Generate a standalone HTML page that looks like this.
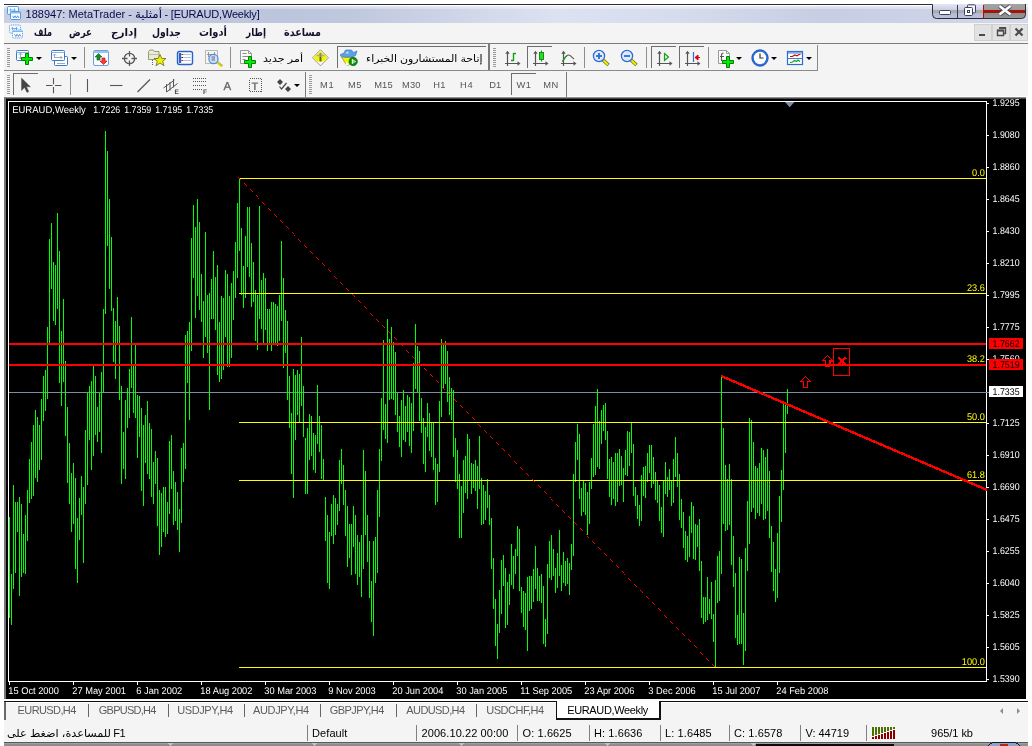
<!DOCTYPE html><html lang="ar"><head><meta charset="utf-8"><title>188947: MetaTrader</title><style>
html,body{margin:0;padding:0;background:#fff;}
body{width:1032px;height:746px;position:relative;overflow:hidden;font-family:"Liberation Sans","DejaVu Sans",sans-serif;font-size:11px;color:#000;}
.a{position:absolute;}
.t{position:absolute;white-space:nowrap;line-height:12px;height:12px;}
.ui{font-size:11px;}
svg{position:absolute;overflow:visible;}
svg text{font-family:"Liberation Sans","DejaVu Sans",sans-serif;text-rendering:geometricPrecision;}
</style></head><body><div id="root" style="position:absolute;left:0;top:0;width:1032px;height:746px;will-change:transform">
<div class="a" style="left:4px;top:4px;width:1024px;height:738px;background:#f4f4f4"></div>
<div class="a" style="left:4px;top:4px;width:1024px;height:19px;background:linear-gradient(90deg,#cad0e3 0%,#c3cadf 14%,#bcc5dc 27%,#c0c8de 34%,#cfd5e8 44%,#dde2f1 54%,#d6dced 66%,#c7cee3 80%,#cbd1e6 88%,#d4d9ec 100%)"></div>
<div class="a" style="left:4px;top:5px;width:1024px;height:4px;background:linear-gradient(rgba(255,255,255,1) 0%,rgba(255,255,255,.95) 25%,rgba(255,255,255,.55) 26%,rgba(255,255,255,.25) 100%)"></div>
<div class="t " id="ti1" dir="ltr" style="left:25.5px;top:8px;font-size:11px;color:#0a0a48;line-height:12px;height:12px;letter-spacing:0.026px;">188947: MetaTrader -</div>
<div class="t " id="ti2" dir="rtl" style="left:134.5px;top:8px;font-size:11px;color:#0a0a48;line-height:12px;height:12px;transform:scaleX(1.0740);transform-origin:0 0;">أمثلية</div>
<div class="t " id="ti3" dir="ltr" style="left:164.5px;top:8px;font-size:11px;color:#0a0a48;line-height:12px;height:12px;letter-spacing:-0.188px;">- [EURAUD,Weekly]</div>
<div class="a" style="left:4px;top:43px;width:1024px;height:1px;background:#7c7c7c"></div>
<div class="t " id="m0" dir="rtl" style="left:33.5px;top:26px;font-size:11px;font-weight:bold;color:#10102a;line-height:12px;height:12px;transform:scaleX(0.7375);transform-origin:0 0;">ملف</div>
<div class="t " id="m1" dir="rtl" style="left:68.5px;top:26px;font-size:11px;font-weight:bold;color:#10102a;line-height:12px;height:12px;transform:scaleX(0.7889);transform-origin:0 0;">عرض</div>
<div class="t " id="m2" dir="rtl" style="left:110.5px;top:26px;font-size:11px;font-weight:bold;color:#10102a;line-height:12px;height:12px;transform:scaleX(0.9471);transform-origin:0 0;">إدارج</div>
<div class="t " id="m3" dir="rtl" style="left:151.5px;top:26px;font-size:11px;font-weight:bold;color:#10102a;line-height:12px;height:12px;transform:scaleX(0.8421);transform-origin:0 0;">جداول</div>
<div class="t " id="m4" dir="rtl" style="left:198.5px;top:26px;font-size:11px;font-weight:bold;color:#10102a;line-height:12px;height:12px;transform:scaleX(0.9010);transform-origin:0 0;">أدوات</div>
<div class="t " id="m5" dir="rtl" style="left:245.5px;top:26px;font-size:11px;font-weight:bold;color:#10102a;line-height:12px;height:12px;transform:scaleX(0.8127);transform-origin:0 0;">إطار</div>
<div class="t " id="m6" dir="rtl" style="left:283.5px;top:26px;font-size:11px;font-weight:bold;color:#10102a;line-height:12px;height:12px;transform:scaleX(0.8706);transform-origin:0 0;">مساعدة</div>
<div class="a" id="chart" style="left:4px;top:97px;width:1024px;height:602px;background:#000"></div>
<div class="a" style="left:4px;top:96px;width:1024px;height:1px;background:#fdfdfd"></div>
<div class="a" style="left:4px;top:97px;width:1024px;height:1px;background:#8c8c8c"></div>
<div class="a" style="left:4px;top:98px;width:1024px;height:1px;background:#484848"></div>
<div class="a" style="left:4px;top:97px;width:2px;height:602px;background:#777"></div>
<div class="a" style="left:1026px;top:97px;width:2px;height:604px;background:#fcfcfc"></div>
<div class="a" style="left:4px;top:699px;width:1024px;height:2px;background:#fcfcfc"></div>
<svg id="cs" style="left:0;top:0" width="1032" height="746" viewBox="0 0 1032 746">
<g shape-rendering="crispEdges">
<path d="M8.5 681.5V101.5H986.5V681.5H8.5" fill="none" stroke="#fff" stroke-width="1"/>
<path d="M987 103.5h2M987 135.5h2M987 167.5h2M987 199.5h2M987 231.5h2M987 263.5h2M987 295.5h2M987 327.5h2M987 359.5h2M987 423.5h2M987 455.5h2M987 487.5h2M987 519.5h2M987 551.5h2M987 583.5h2M987 615.5h2M987 647.5h2M987 679.5h2" stroke="#fff" stroke-width="1" fill="none"/>
<path d="M9.5 682v3M73.5 682v3M137.5 682v3M201.5 682v3M265.5 682v3M329.5 682v3M393.5 682v3M457.5 682v3M521.5 682v3M585.5 682v3M649.5 682v3M713.5 682v3M777.5 682v3" stroke="#fff" stroke-width="1" fill="none"/>
<path d="M9 392.5H986" stroke="#7d8da3" stroke-width="1" fill="none"/>
<path id="bars" d="M9.5 517V618M11.5 574V625M13.5 485V589M15.5 502V573M17.5 502V532M19.5 497V596M21.5 504V577M23.5 534V573M25.5 515V574M27.5 490V541M29.5 459V503M31.5 442V499M33.5 425V496M35.5 410V478M37.5 417V482M39.5 425V470M41.5 399V460M43.5 376V421M45.5 370V411M47.5 327V399M49.5 239V343M51.5 223V289M53.5 262V321M55.5 265V325M57.5 213V309M59.5 251V383M61.5 331V406M63.5 299V382M65.5 361V436M67.5 407V483M69.5 443V504M71.5 473V532M73.5 463V524M75.5 478V569M77.5 518V583M79.5 498V540M81.5 476V515M83.5 487V563M85.5 430V504M87.5 393V485M89.5 386V440M91.5 381V470M93.5 366V456M95.5 376V435M97.5 407V442M99.5 393V432M101.5 372V453M103.5 309V393M105.5 131V314M107.5 151V246M109.5 199V289M111.5 237V311M113.5 308V362M115.5 321V379M117.5 297V343M119.5 326V400M121.5 386V484M123.5 432V469M125.5 400V479M127.5 388V428M129.5 369V418M131.5 317V388M133.5 366V413M135.5 345V418M137.5 395V458M139.5 396V437M141.5 408V491M143.5 425V506M145.5 415V463M147.5 401V474M149.5 423V479M151.5 429V497M153.5 462V504M155.5 451V484M157.5 458V526M159.5 490V555M161.5 493V547M163.5 487V532M165.5 487V537M167.5 502V534M169.5 441V514M171.5 435V489M173.5 471V525M175.5 482V521M177.5 492V530M179.5 509V552M181.5 448V523M183.5 443V482M185.5 335V469M187.5 331V383M189.5 322V420M191.5 238V351M193.5 205V278M195.5 227V318M197.5 199V296M199.5 222V310M201.5 274V322M203.5 301V358M205.5 232V337M207.5 295V353M209.5 293V410M211.5 279V319M213.5 251V319M215.5 277V330M217.5 265V375M219.5 322V382M221.5 296V379M223.5 298V370M225.5 270V337M227.5 274V367M229.5 296V367M231.5 283V358M233.5 271V320M235.5 242V298M237.5 203V278M239.5 179V251M241.5 228V295M243.5 266V308M245.5 236V298M247.5 207V267M249.5 207V277M251.5 243V307M253.5 262V302M255.5 290V341M257.5 295V350M259.5 206V319M261.5 280V329M263.5 273V343M265.5 278V330M267.5 309V351M269.5 309V343M271.5 302V351M273.5 302V343M275.5 304V343M277.5 306V346M279.5 295V341M281.5 241V321M283.5 278V368M285.5 310V353M287.5 321V400M289.5 376V428M291.5 413V474M293.5 369V498M295.5 375V440M297.5 370V415M299.5 374V422M301.5 337V406M303.5 386V437M305.5 438V494M307.5 428V494M309.5 414V460M311.5 416V456M313.5 433V470M315.5 435V473M317.5 385V444M319.5 416V452M321.5 425V479M323.5 459V480M325.5 497V541M327.5 515V583M329.5 532V589M331.5 504V536M333.5 495V544M335.5 498V535M337.5 504V525M339.5 460V511M341.5 449V484M343.5 465V505M345.5 490V536M347.5 506V567M349.5 524V558M351.5 524V575M353.5 506V547M355.5 515V574M357.5 535V585M359.5 542V577M361.5 535V597M363.5 450V569M365.5 471V535M367.5 515V562M369.5 541V598M371.5 581V622M373.5 541V636M375.5 537V583M377.5 490V573M379.5 449V517M381.5 398V461M383.5 340V430M385.5 404V439M387.5 319V443M389.5 339V400M391.5 327V399M393.5 342V400M395.5 352V415M397.5 393V432M399.5 416V447M401.5 400V457M403.5 390V440M405.5 406V442M407.5 395V432M409.5 397V446M411.5 403V453M413.5 363V431M415.5 324V389M417.5 346V392M419.5 351V421M421.5 398V433M423.5 418V464M425.5 427V472M427.5 403V437M429.5 413V451M431.5 423V457M433.5 423V470M435.5 458V505M437.5 464V502M439.5 401V472M441.5 339V417M443.5 344V388M445.5 341V384M447.5 351V402M449.5 377V415M451.5 388V420M453.5 390V457M455.5 438V482M457.5 450V489M459.5 474V538M461.5 486V538M463.5 460V513M465.5 456V493M467.5 434V499M469.5 439V481M471.5 463V494M473.5 464V488M475.5 460V491M477.5 466V509M479.5 436V489M481.5 478V525M483.5 485V524M485.5 491V520M487.5 479V508M489.5 495V525M491.5 518V569M493.5 558V609M495.5 599V646M497.5 624V659M499.5 590V633M501.5 560V614M503.5 555V586M505.5 568V628M507.5 582V625M509.5 574V605M511.5 544V585M513.5 556V589M515.5 549V574M517.5 526V556M519.5 529V591M521.5 587V613M523.5 591V627M525.5 593V630M527.5 577V651M529.5 576V611M531.5 576V609M533.5 569V602M535.5 546V589M537.5 568V601M539.5 576V601M541.5 574V603M543.5 586V644M545.5 619V647M547.5 564V634M549.5 541V578M551.5 535V580M553.5 549V576M555.5 568V593M557.5 553V588M559.5 530V576M561.5 565V591M563.5 552V583M565.5 561V586M567.5 558V584M569.5 563V595M571.5 544V570M573.5 474V556M575.5 442V482M577.5 424V460M579.5 434V499M581.5 488V516M583.5 481V512M585.5 483V515M587.5 492V535M589.5 482V524M591.5 458V489M593.5 424V477M595.5 406V475M597.5 389V467M599.5 421V469M601.5 410V444M603.5 405V431M605.5 403V440M607.5 431V479M609.5 459V497M611.5 457V505M613.5 462V499M615.5 453V506M617.5 453V502M619.5 449V486M621.5 456V485M623.5 468V502M625.5 450V475M627.5 431V476M629.5 432V466M631.5 422V453M633.5 444V496M635.5 487V506M637.5 495V519M639.5 505V526M641.5 475V521M643.5 467V496M645.5 466V498M647.5 453V482M649.5 445V473M651.5 445V488M653.5 457V484M655.5 472V500M657.5 481V503M659.5 485V521M661.5 507V533M663.5 480V537M665.5 462V494M667.5 477V497M669.5 469V490M671.5 480V506M673.5 459V503M675.5 437V477M677.5 453V487M679.5 474V520M681.5 499V528M683.5 512V548M685.5 531V560M687.5 536V562M689.5 516V557M691.5 502V533M693.5 506V559M695.5 524V560M697.5 525V547M699.5 519V571M701.5 561V618M703.5 597V624M705.5 597V622M707.5 577V620M709.5 599V614M711.5 582V619M713.5 614V642M715.5 580V667M717.5 556V603M719.5 551V601M721.5 376V574M723.5 428V524M725.5 465V531M727.5 479V530M729.5 464V525M731.5 479V565M733.5 536V587M735.5 573V638M737.5 615V645M739.5 557V644M741.5 559V644M743.5 613V665M745.5 548V651M747.5 501V571M749.5 418V544M751.5 420V512M753.5 442V508M755.5 466V519M757.5 468V513M759.5 463V516M761.5 448V504M763.5 450V520M765.5 457V519M767.5 449V511M769.5 471V538M771.5 526V572M773.5 542V591M775.5 569V602M777.5 533V598M779.5 496V573M781.5 470V522M783.5 404V490M785.5 404V453M787.5 389V414" stroke="#00ff00" stroke-width="1" fill="none"/>
<path d="M239 178.5H986M239 293.5H986M239 364.5H986M239 422.5H986M239 480.5H986M239 667.5H986" stroke="#ffff00" stroke-width="1" fill="none"/>
<path d="M9 344H986M9 365H986" stroke="#ff0000" stroke-width="2" fill="none"/>
</g>
<path d="M238 177.5h1M239 178.5h1M240 179.5h1M244 183.5h1M245 184.5h1M246 185.5h1M250 189.5h1M251 190.5h1M252 191.5h1M256 195.5h1M257 196.5h1M258 198.5h1M262 202.5h1M263 203.5h1M264 204.5h1M268 208.5h1M269 209.5h1M270 210.5h1M274 214.5h1M275 215.5h1M276 216.5h1M280 220.5h1M281 221.5h1M282 222.5h1M286 226.5h1M287 227.5h1M288 228.5h1M292 232.5h1M293 233.5h1M294 235.5h1M298 239.5h1M299 240.5h1M300 241.5h1M304 245.5h1M305 246.5h1M306 247.5h1M310 251.5h1M311 252.5h1M312 253.5h1M316 257.5h1M317 258.5h1M318 259.5h1M322 263.5h1M323 264.5h1M324 265.5h1M328 269.5h1M329 270.5h1M330 271.5h1M334 276.5h1M335 277.5h1M336 278.5h1M340 282.5h1M341 283.5h1M342 284.5h1M346 288.5h1M347 289.5h1M348 290.5h1M352 294.5h1M353 295.5h1M354 296.5h1M358 300.5h1M359 301.5h1M360 302.5h1M364 306.5h1M365 307.5h1M366 308.5h1M370 313.5h1M371 314.5h1M372 315.5h1M376 319.5h1M377 320.5h1M378 321.5h1M382 325.5h1M383 326.5h1M384 327.5h1M388 331.5h1M389 332.5h1M390 333.5h1M394 337.5h1M395 338.5h1M396 339.5h1M400 343.5h1M401 344.5h1M402 345.5h1M406 350.5h1M407 351.5h1M408 352.5h1M412 356.5h1M413 357.5h1M414 358.5h1M418 362.5h1M419 363.5h1M420 364.5h1M424 368.5h1M425 369.5h1M426 370.5h1M430 374.5h1M431 375.5h1M432 376.5h1M436 380.5h1M437 381.5h1M438 382.5h1M442 387.5h1M443 388.5h1M444 389.5h1M448 393.5h1M449 394.5h1M450 395.5h1M454 399.5h1M455 400.5h1M456 401.5h1M460 405.5h1M461 406.5h1M462 407.5h1M466 411.5h1M467 412.5h1M468 413.5h1M472 417.5h1M473 418.5h1M474 419.5h1M478 424.5h1M479 425.5h1M480 426.5h1M484 430.5h1M485 431.5h1M486 432.5h1M490 436.5h1M491 437.5h1M492 438.5h1M496 442.5h1M497 443.5h1M498 444.5h1M502 448.5h1M503 449.5h1M504 450.5h1M508 454.5h1M509 455.5h1M510 456.5h1M514 461.5h1M515 462.5h1M516 463.5h1M520 467.5h1M521 468.5h1M522 469.5h1M526 473.5h1M527 474.5h1M528 475.5h1M532 479.5h1M533 480.5h1M534 481.5h1M538 485.5h1M539 486.5h1M540 487.5h1M544 491.5h1M545 492.5h1M546 493.5h1M550 497.5h1M551 499.5h1M552 500.5h1M556 504.5h1M557 505.5h1M558 506.5h1M562 510.5h1M563 511.5h1M564 512.5h1M568 516.5h1M569 517.5h1M570 518.5h1M574 522.5h1M575 523.5h1M576 524.5h1M580 528.5h1M581 529.5h1M582 530.5h1M586 534.5h1M587 536.5h1M588 537.5h1M592 541.5h1M593 542.5h1M594 543.5h1M598 547.5h1M599 548.5h1M600 549.5h1M604 553.5h1M605 554.5h1M606 555.5h1M610 559.5h1M611 560.5h1M612 561.5h1M616 565.5h1M617 566.5h1M618 567.5h1M622 571.5h1M623 572.5h1M624 574.5h1M628 578.5h1M629 579.5h1M630 580.5h1M634 584.5h1M635 585.5h1M636 586.5h1M640 590.5h1M641 591.5h1M642 592.5h1M646 596.5h1M647 597.5h1M648 598.5h1M652 602.5h1M653 603.5h1M654 604.5h1M658 608.5h1M659 609.5h1M660 610.5h1M664 615.5h1M665 616.5h1M666 617.5h1M670 621.5h1M671 622.5h1M672 623.5h1M676 627.5h1M677 628.5h1M678 629.5h1M682 633.5h1M683 634.5h1M684 635.5h1M688 639.5h1M689 640.5h1M690 641.5h1M694 645.5h1M695 646.5h1M696 647.5h1M700 652.5h1M701 653.5h1M702 654.5h1M706 658.5h1M707 659.5h1M708 660.5h1M712 664.5h1M713 665.5h1M714 666.5h1" stroke="#ff0000" stroke-width="1" fill="none" shape-rendering="crispEdges"/>
<path d="M721 374.7L987 488.7V491.2L721 377.2z" fill="#ff0000" shape-rendering="crispEdges"/>
<path d="M805 376.5h1M805 376.5h1M804 377.5h1M806 377.5h1M803 378.5h1M807 378.5h1M802 379.5h1M808 379.5h1M801 380.5h1M809 380.5h1M800 381.5h4M807 381.5h4M803.5 382v5M807.5 382v5M803 387.5h5" fill="none" stroke="#ff0000" stroke-width="1" shape-rendering="crispEdges"/>
<path d="M827 355.5h1M827 355.5h1M826 356.5h1M828 356.5h1M825 357.5h1M829 357.5h1M824 358.5h1M830 358.5h1M823 359.5h1M831 359.5h1M822 360.5h4M829 360.5h4M825.5 361v5M829.5 361v5M825 366.5h5" fill="none" stroke="#ff0000" stroke-width="1" shape-rendering="crispEdges"/>
<path d="M830.5 361.5h3v3h-3zM833.5 348.5h16v27h-16z" fill="none" stroke="#ff0000" stroke-width="1" shape-rendering="crispEdges"/>
<path d="M838 357.5H840M844 357.5H846M838 358.5H841M843 358.5H847M839 359.5H845M840 360.5H844M840 361.5H844M839 362.5H845M838 363.5H841M842 363.5H846" fill="none" stroke="#ff0000" stroke-width="1" shape-rendering="crispEdges"/>
<path d="M785 102h9.400l-4.700 5.200z" fill="#7f8ea6"/>
<path d="M986 392.5h3" stroke="#7d8da3" stroke-width="1" shape-rendering="crispEdges"/>
<rect x="989" y="338" width="34" height="11" fill="#ff0000" shape-rendering="crispEdges"/>
<rect x="989" y="359" width="34" height="11" fill="#ff0000" shape-rendering="crispEdges"/>
<rect x="989" y="386" width="34" height="11" fill="#ffffff" shape-rendering="crispEdges"/>
<text transform="translate(992.60 106) scale(0.9009 1)" font-size="9.8" fill="#fff">1.9295</text>
<text transform="translate(992.60 138) scale(0.9009 1)" font-size="9.8" fill="#fff">1.9080</text>
<text transform="translate(992.60 170) scale(0.9009 1)" font-size="9.8" fill="#fff">1.8860</text>
<text transform="translate(992.60 202) scale(0.9009 1)" font-size="9.8" fill="#fff">1.8645</text>
<text transform="translate(992.60 234) scale(0.9009 1)" font-size="9.8" fill="#fff">1.8430</text>
<text transform="translate(992.60 266) scale(0.9009 1)" font-size="9.8" fill="#fff">1.8210</text>
<text transform="translate(992.60 298) scale(0.9009 1)" font-size="9.8" fill="#fff">1.7995</text>
<text transform="translate(992.60 330) scale(0.9009 1)" font-size="9.8" fill="#fff">1.7775</text>
<text transform="translate(992.60 426) scale(0.9009 1)" font-size="9.8" fill="#fff">1.7125</text>
<text transform="translate(992.60 458) scale(0.9009 1)" font-size="9.8" fill="#fff">1.6910</text>
<text transform="translate(992.60 490) scale(0.9009 1)" font-size="9.8" fill="#fff">1.6690</text>
<text transform="translate(992.60 522) scale(0.9009 1)" font-size="9.8" fill="#fff">1.6475</text>
<text transform="translate(992.60 554) scale(0.9009 1)" font-size="9.8" fill="#fff">1.6255</text>
<text transform="translate(992.60 586) scale(0.9009 1)" font-size="9.8" fill="#fff">1.6040</text>
<text transform="translate(992.60 618) scale(0.9009 1)" font-size="9.8" fill="#fff">1.5825</text>
<text transform="translate(992.60 650) scale(0.9009 1)" font-size="9.8" fill="#fff">1.5605</text>
<text transform="translate(992.60 682) scale(0.9009 1)" font-size="9.8" fill="#fff">1.5390</text>
<clipPath id="c56"><rect x="987" y="350" width="40" height="9"/></clipPath>
<g clip-path="url(#c56)"><text transform="translate(992.6 362) scale(0.9009 1)" font-size="9.8" fill="#fff">1.7560</text></g>
<text transform="translate(992.60 347) scale(0.9009 1)" font-size="9.8" fill="#000">1.7662</text>
<text transform="translate(992.60 368) scale(0.9009 1)" font-size="9.8" fill="#000">1.7519</text>
<text transform="translate(992.60 395) scale(0.9009 1)" font-size="9.8" fill="#000">1.7335</text>
<text transform="translate(972.03 176) scale(0.9376 1)" font-size="9.8" fill="#ffff00">0.0</text>
<text transform="translate(966.92 291) scale(0.9374 1)" font-size="9.8" fill="#ffff00">23.6</text>
<text transform="translate(966.92 362) scale(0.9374 1)" font-size="9.8" fill="#ffff00">38.2</text>
<text transform="translate(966.92 420) scale(0.9374 1)" font-size="9.8" fill="#ffff00">50.0</text>
<text transform="translate(966.92 478) scale(0.9374 1)" font-size="9.8" fill="#ffff00">61.8</text>
<text transform="translate(961.81 665) scale(0.9373 1)" font-size="9.8" fill="#ffff00">100.0</text>
<text transform="translate(8.30 693.5) scale(0.9472 1)" font-size="9.8" fill="#fff">15 Oct 2000</text>
<text transform="translate(72.30 693.5) scale(0.9473 1)" font-size="9.8" fill="#fff">27 May 2001</text>
<text transform="translate(136.30 693.5) scale(0.9475 1)" font-size="9.8" fill="#fff">6 Jan 2002</text>
<text transform="translate(200.30 693.5) scale(0.9475 1)" font-size="9.8" fill="#fff">18 Aug 2002</text>
<text transform="translate(264.30 693.5) scale(0.9475 1)" font-size="9.8" fill="#fff">30 Mar 2003</text>
<text transform="translate(328.30 693.5) scale(0.9475 1)" font-size="9.8" fill="#fff">9 Nov 2003</text>
<text transform="translate(392.30 693.5) scale(0.9474 1)" font-size="9.8" fill="#fff">20 Jun 2004</text>
<text transform="translate(456.30 693.5) scale(0.9474 1)" font-size="9.8" fill="#fff">30 Jan 2005</text>
<text transform="translate(520.30 693.5) scale(0.9474 1)" font-size="9.8" fill="#fff">11 Sep 2005</text>
<text transform="translate(584.30 693.5) scale(0.9473 1)" font-size="9.8" fill="#fff">23 Apr 2006</text>
<text transform="translate(648.30 693.5) scale(0.9475 1)" font-size="9.8" fill="#fff">3 Dec 2006</text>
<text transform="translate(712.30 693.5) scale(0.9474 1)" font-size="9.8" fill="#fff">15 Jul 2007</text>
<text transform="translate(776.30 693.5) scale(0.9473 1)" font-size="9.8" fill="#fff">24 Feb 2008</text>
<text transform="translate(12.20 113.3) scale(0.9680 1)" font-size="9.8" fill="#fff">EURAUD,Weekly</text>
<text transform="translate(93.20 113.3) scale(0.9009 1)" font-size="9.8" fill="#fff">1.7226</text>
<text transform="translate(124.20 113.3) scale(0.9009 1)" font-size="9.8" fill="#fff">1.7359</text>
<text transform="translate(155.20 113.3) scale(0.9009 1)" font-size="9.8" fill="#fff">1.7195</text>
<text transform="translate(186.20 113.3) scale(0.9009 1)" font-size="9.8" fill="#fff">1.7335</text>
</svg>
<div class="a" style="left:4px;top:701px;width:1024px;height:1px;background:#111"></div>
<div class="a" style="left:4px;top:702px;width:1024px;height:1px;background:#fff"></div>
<div class="a" style="left:4px;top:702px;width:2px;height:18px;background:#6a6a6a"></div>
<div class="t " id="tab0" dir="ltr" style="left:17.6px;top:704px;font-size:11px;color:#5c5c5c;line-height:12px;height:12px;letter-spacing:-0.609px;">EURUSD,H4</div>
<div class="t " id="tab1" dir="ltr" style="left:98.8px;top:704px;font-size:11px;color:#5c5c5c;line-height:12px;height:12px;letter-spacing:-0.742px;">GBPUSD,H4</div>
<div class="t " id="tab2" dir="ltr" style="left:177.3px;top:704px;font-size:11px;color:#5c5c5c;line-height:12px;height:12px;letter-spacing:-0.412px;">USDJPY,H4</div>
<div class="t " id="tab3" dir="ltr" style="left:253.10000000000002px;top:704px;font-size:11px;color:#5c5c5c;line-height:12px;height:12px;letter-spacing:-0.390px;">AUDJPY,H4</div>
<div class="t " id="tab4" dir="ltr" style="left:329.8px;top:704px;font-size:11px;color:#5c5c5c;line-height:12px;height:12px;letter-spacing:-0.579px;">GBPJPY,H4</div>
<div class="t " id="tab5" dir="ltr" style="left:406.3px;top:704px;font-size:11px;color:#5c5c5c;line-height:12px;height:12px;letter-spacing:-0.598px;">AUDUSD,H4</div>
<div class="t " id="tab6" dir="ltr" style="left:486.3px;top:704px;font-size:11px;color:#5c5c5c;line-height:12px;height:12px;letter-spacing:-0.482px;">USDCHF,H4</div>
<div class="a" style="left:88px;top:704px;width:1px;height:13px;background:#666"></div>
<div class="a" style="left:168px;top:704px;width:1px;height:13px;background:#666"></div>
<div class="a" style="left:244px;top:704px;width:1px;height:13px;background:#666"></div>
<div class="a" style="left:320px;top:704px;width:1px;height:13px;background:#666"></div>
<div class="a" style="left:396px;top:704px;width:1px;height:13px;background:#666"></div>
<div class="a" style="left:476px;top:704px;width:1px;height:13px;background:#666"></div>
<div class="a" style="left:556px;top:701px;width:105px;height:19px;background:#fff;border:1px solid #111;border-top:none;box-sizing:border-box;border-right:2px solid #111;border-bottom:2px solid #111"></div>
<div class="t " id="tabA" dir="ltr" style="left:567.2px;top:704px;font-size:11px;color:#000;line-height:12px;height:12px;letter-spacing:-0.360px;">EURAUD,Weekly</div>
<div class="a" style="left:1000px;top:708px;width:0;height:0;border:3px solid transparent;border-right:3px solid #8c8c8c;border-left:none"></div>
<div class="a" style="left:1017px;top:708px;width:0;height:0;border:3px solid transparent;border-left:3px solid #8c8c8c;border-right:none"></div>
<div class="t " id="st0a" dir="rtl" style="left:6.5px;top:727px;font-size:11px;color:#000;line-height:12px;height:12px;transform:scaleX(1.0215);transform-origin:0 0;">للمساعدة، اضغط على</div>
<div class="t " id="st0b" dir="ltr" style="left:113.3px;top:727px;font-size:11px;color:#000;line-height:12px;height:12px;letter-spacing:-0.572px;">F1</div>
<div class="t " id="st1" dir="ltr" style="left:312.0px;top:727px;font-size:11px;color:#000;line-height:12px;height:12px;letter-spacing:0.092px;">Default</div>
<div class="t " id="st2" dir="ltr" style="left:421.5px;top:727px;font-size:11px;color:#000;line-height:12px;height:12px;letter-spacing:0.085px;">2006.10.22 00:00</div>
<div class="t " id="st3" dir="ltr" style="left:522.5px;top:727px;font-size:11px;color:#000;line-height:12px;height:12px;letter-spacing:0.108px;">O: 1.6625</div>
<div class="t " id="st4" dir="ltr" style="left:594.0px;top:727px;font-size:11px;color:#000;line-height:12px;height:12px;letter-spacing:0.089px;">H: 1.6636</div>
<div class="t " id="st5" dir="ltr" style="left:665.0px;top:727px;font-size:11px;color:#000;line-height:12px;height:12px;letter-spacing:0.103px;">L: 1.6485</div>
<div class="t " id="st6" dir="ltr" style="left:734.0px;top:727px;font-size:11px;color:#000;line-height:12px;height:12px;letter-spacing:0.089px;">C: 1.6578</div>
<div class="t " id="st7" dir="ltr" style="left:805.5px;top:727px;font-size:11px;color:#000;line-height:12px;height:12px;letter-spacing:-0.018px;">V: 44719</div>
<div class="t " id="st8" dir="ltr" style="left:931.1px;top:727px;font-size:11px;color:#000;line-height:12px;height:12px;letter-spacing:-0.050px;">965/1 kb</div>
<div class="a" style="left:307px;top:725px;width:1px;height:16px;background:#808080"></div>
<div class="a" style="left:416px;top:725px;width:1px;height:16px;background:#808080"></div>
<div class="a" style="left:517px;top:725px;width:1px;height:16px;background:#808080"></div>
<div class="a" style="left:589px;top:725px;width:1px;height:16px;background:#808080"></div>
<div class="a" style="left:660px;top:725px;width:1px;height:16px;background:#808080"></div>
<div class="a" style="left:729px;top:725px;width:1px;height:16px;background:#808080"></div>
<div class="a" style="left:800px;top:725px;width:1px;height:16px;background:#808080"></div>
<div class="a" style="left:866px;top:725px;width:1px;height:16px;background:#808080"></div>
<svg style="left:0;top:0" width="1032" height="746" shape-rendering="crispEdges"><rect x="872" y="727" width="2" height="9" fill="#4a7000"/><rect x="872" y="737" width="2" height="2" fill="#8a0000"/><rect x="875" y="727" width="2" height="8" fill="#4a7000"/><rect x="875" y="736" width="2" height="3" fill="#8a0000"/><rect x="878" y="727" width="2" height="7" fill="#4a7000"/><rect x="878" y="735" width="2" height="4" fill="#8a0000"/><rect x="881" y="727" width="2" height="6" fill="#4a7000"/><rect x="881" y="734" width="2" height="5" fill="#8a0000"/><rect x="884" y="727" width="2" height="5" fill="#4a7000"/><rect x="884" y="733" width="2" height="6" fill="#8a0000"/><rect x="887" y="727" width="2" height="4" fill="#4a7000"/><rect x="887" y="732" width="2" height="7" fill="#8a0000"/><rect x="890" y="727" width="2" height="3" fill="#4a7000"/><rect x="890" y="731" width="2" height="8" fill="#8a0000"/><rect x="893" y="727" width="2" height="2" fill="#4a7000"/><rect x="893" y="730" width="2" height="9" fill="#8a0000"/><rect x="4" y="742" width="1024" height="1" fill="#5a5a5a"/><rect x="4" y="743" width="1024" height="1" fill="#a0a0a0"/><rect x="4" y="744" width="1024" height="2" fill="#8e8e8e"/><path d="M167 743h6l-3 3z" fill="#c4c4c4"/><path d="M311 743h6l-3 3z" fill="#c4c4c4"/><path d="M458 743h6l-3 3z" fill="#c4c4c4"/><path d="M604 743h6l-3 3z" fill="#c4c4c4"/><path d="M750 743h6l-3 3z" fill="#c4c4c4"/><rect x="756" y="744" width="138" height="2" fill="#0a0a0a"/><path d="M988 746q2 -3.500 8 -3.500h16q6 0 8 3.500z" fill="#8aa4cc" stroke="#1a1a1a" stroke-width="1"/><rect x="1000" y="744" width="8" height="2" fill="#b02a1a"/></svg>
<svg id="chrome" style="left:0;top:0" width="1032" height="46" viewBox="0 0 1032 46">
<defs><linearGradient id="gb" x1="0" y1="0" x2="0" y2="1"><stop offset="0" stop-color="#e3e6f4"/><stop offset=".42" stop-color="#c9cde3"/><stop offset=".43" stop-color="#a9abb3"/><stop offset=".62" stop-color="#a9abb3"/><stop offset=".63" stop-color="#b4b9d6"/><stop offset="1" stop-color="#bcc1dc"/></linearGradient><linearGradient id="gc" x1="0" y1="0" x2="0" y2="1"><stop offset="0" stop-color="#a4a4a4"/><stop offset=".42" stop-color="#9a9a9a"/><stop offset=".43" stop-color="#a51405"/><stop offset=".64" stop-color="#a51405"/><stop offset=".65" stop-color="#8c8c8c"/><stop offset="1" stop-color="#969696"/></linearGradient></defs>
<path d="M932.500 4v10.500q0 4 4 4h85q4 0 4 -4v-10.500z" fill="url(#gb)"/>
<path d="M983.500 4v14.500h38q4 0 4 -4v-10.500z" fill="url(#gc)"/>
<path d="M4 4.500H932.500v10q0 4 4 4h85q4 0 4 -4v-10.500" fill="none" stroke="#2e2e2e" stroke-width="1"/>
<path d="M957.500 5v13" stroke="#3a3a4a" stroke-width="1"/><path d="M983.500 5v13" stroke="#b01000" stroke-width="1"/>
<rect x="939.500" y="10.500" width="11" height="4" rx="1" fill="#fff" stroke="#3a3f5c" stroke-width="1"/>
<rect x="967.500" y="4.800" width="8" height="8" rx="1" fill="#f4f4fa" stroke="#3a3f5c" stroke-width="1"/>
<rect x="964.500" y="7.500" width="8" height="8" rx="1" fill="#fff" stroke="#3a3f5c" stroke-width="1"/>
<rect x="967.500" y="10.500" width="2" height="2" fill="#fff" stroke="#3a3f5c" stroke-width="1"/>
<path d="M999.500 6l11 8.500M1010.500 6l-11 8.500" stroke="#44485e" stroke-width="4.200" fill="none"/>
<path d="M999.500 6l11 8.500M1010.500 6l-11 8.500" stroke="#fff" stroke-width="2.600" fill="none"/>
<rect x="974.5" y="24.500" width="17" height="16" fill="#e2e2e2" stroke="#d0d0d0" stroke-width="1"/>
<rect x="992.5" y="24.500" width="17" height="16" fill="#e2e2e2" stroke="#d0d0d0" stroke-width="1"/>
<rect x="1010.5" y="24.500" width="17" height="16" fill="#e2e2e2" stroke="#d0d0d0" stroke-width="1"/>
<path d="M979 35h6" stroke="#4a4a4a" stroke-width="2"/>
<path d="M999.500 28h6v5.500h-2M997.500 30.500h6v5h-6z" stroke="#4a4a4a" stroke-width="1.400" fill="none"/><path d="M997 30.500h7M999 27.800h7" stroke="#4a4a4a" stroke-width="1.800"/>
<path d="M1015.500 28.500l7 7M1022.500 28.500l-7 7" stroke="#4a4a4a" stroke-width="2.200" fill="none"/>
<rect x="7.5" y="6.5" width="11" height="8" rx="1.200" fill="#f4f9ff" stroke="#4a9ae6"/><path d="M9.5 10h6M10.5 8.5v3M14.5 8.5v3" stroke="#6a9ad8" stroke-width=".8"/><rect x="10.5" y="11.5" width="10" height="8" rx="1.200" fill="#fbfdff" stroke="#4a9ae6"/><path d="M11 12.8h9" stroke="#7abaf4" stroke-width="1.400"/><path d="M12.5 15.8l1.300 2.200 1.300 -2.200 1.300 2.200 1.300 -2.200 1.300 2.200" stroke="#3a7ad0" stroke-width=".8" fill="none"/>
<rect x="9.5" y="25.0" width="11" height="8" rx="1.200" fill="#f4f9ff" stroke="#4a9ae6" stroke-dasharray="1.500 .700" stroke-opacity=".8"/><path d="M11.5 28.5h6M12.5 27.0v3M16.5 27.0v3" stroke="#6a9ad8" stroke-width=".8"/><rect x="12.5" y="30.0" width="10" height="8" rx="1.200" fill="#fbfdff" stroke="#4a9ae6" stroke-dasharray="1.500 .700" stroke-opacity=".8"/><path d="M13 31.3h9" stroke="#7abaf4" stroke-width="1.400"/><path d="M14.5 34.3l1.300 2.200 1.300 -2.200 1.300 2.200 1.300 -2.200 1.300 2.200" stroke="#3a7ad0" stroke-width=".8" fill="none"/>
</svg>
<div class="t " id="tbNew" dir="rtl" style="left:263.3px;top:53px;font-size:10px;color:#000;line-height:12px;height:12px;transform:scaleX(1.1140);transform-origin:0 0;">أمر جديد</div>
<div class="t " id="tbEA" dir="rtl" style="left:366px;top:53px;font-size:10px;color:#000;line-height:12px;height:12px;transform:scaleX(1.0936);transform-origin:0 0;">إتاحة المستشارون الخبراء</div>
<div class="t " id="tf0" dir="ltr" style="left:320.0px;top:80px;font-size:9.33px;color:#555;line-height:11px;height:11px;letter-spacing:0.816px;">M1</div>
<div class="t " id="tf1" dir="ltr" style="left:348.0px;top:80px;font-size:9.33px;color:#555;line-height:11px;height:11px;letter-spacing:0.516px;">M5</div>
<div class="t " id="tf2" dir="ltr" style="left:374.2px;top:80px;font-size:9.33px;color:#555;line-height:11px;height:11px;letter-spacing:0.148px;">M15</div>
<div class="t " id="tf3" dir="ltr" style="left:402.09999999999997px;top:80px;font-size:9.33px;color:#555;line-height:11px;height:11px;letter-spacing:0.148px;">M30</div>
<div class="t " id="tf4" dir="ltr" style="left:433.2px;top:80px;font-size:9.33px;color:#555;line-height:11px;height:11px;letter-spacing:0.281px;">H1</div>
<div class="t " id="tf5" dir="ltr" style="left:460.09999999999997px;top:80px;font-size:9.33px;color:#555;line-height:11px;height:11px;letter-spacing:0.731px;">H4</div>
<div class="t " id="tf6" dir="ltr" style="left:489.2px;top:80px;font-size:9.33px;color:#555;line-height:11px;height:11px;letter-spacing:0.131px;">D1</div>
<div class="t " id="tf7" dir="ltr" style="left:516.5px;top:80px;font-size:9.33px;color:#555;line-height:11px;height:11px;letter-spacing:0.550px;">W1</div>
<div class="t " id="tf8" dir="ltr" style="left:543.1999999999999px;top:80px;font-size:9.33px;color:#555;line-height:11px;height:11px;letter-spacing:0.442px;">MN</div>
<svg id="tb" style="left:0;top:0" width="1032" height="100" viewBox="0 0 1032 100">
<g shape-rendering="crispEdges" fill="none">
<path d="M4 70.5H818M817.5 45V71" stroke="#8a8a8a"/>
<path d="M566.5 72V97M305.5 72V97" stroke="#7a7a7a"/>
<path d="M489 44V70" stroke="#7a7a7a" stroke-width="2"/>
<path d="M7 48.5h3M7 50.5h3M7 52.5h3M7 54.5h3M7 56.5h3M7 58.5h3M7 60.5h3M7 62.5h3M7 64.5h3M7 66.5h3M493 48.5h3M493 50.5h3M493 52.5h3M493 54.5h3M493 56.5h3M493 58.5h3M493 60.5h3M493 62.5h3M493 64.5h3M493 66.5h3M7 75.5h3M7 77.5h3M7 79.5h3M7 81.5h3M7 83.5h3M7 85.5h3M7 87.5h3M7 89.5h3M7 91.5h3M7 93.5h3M309 75.5h3M309 77.5h3M309 79.5h3M309 81.5h3M309 83.5h3M309 85.5h3M309 87.5h3M309 89.5h3M309 91.5h3M309 93.5h3" stroke="#9a9a9a"/>
<path d="M84.5 47V68M230.5 47V68M584.5 47V68M646.5 47V68M708.5 47V68M70.5 74V95" stroke="#8c8c8c"/>
<path d="M337.5 68V46.5H486" stroke="#6e6e6e"/>
<path d="M527.5 68V46.5H552" stroke="#6e6e6e"/>
<path d="M651.5 68V46.5H676" stroke="#6e6e6e"/>
<path d="M679.5 68V46.5H704" stroke="#6e6e6e"/>
<path d="M13.5 95V73.5H38" stroke="#6e6e6e"/>
<path d="M511.5 95V73.5H536" stroke="#6e6e6e"/>
</g>
<path d="M36 57h6l-3 3z" fill="#000"/>
<path d="M71 57h6l-3 3z" fill="#000"/>
<path d="M736 57h6l-3 3z" fill="#000"/>
<path d="M771 57h6l-3 3z" fill="#000"/>
<path d="M806 57h6l-3 3z" fill="#000"/>
<path d="M294 84h6l-3 3z" fill="#000"/>
<rect x="16.5" y="50.5" width="12" height="10" rx="1" fill="#fff" stroke="#3b78c8"/>
<path d="M16.5 52.5h12" stroke="#8db4e8"/>
<path d="M20.5 53.5v5M18.5 55l2-2 2 2M18.5 57l2 2 2-2" stroke="#7f93b0" fill="none" stroke-width=".8"/>
<path d="M25.5 53.5h3v4h4v3h-4v4h-3v-4h-4v-3h4z" fill="#00ee00" stroke="#0a7a0a" stroke-width="1"/>
<rect x="54.5" y="56.5" width="13" height="9" rx="1" fill="#fff" stroke="#3b78c8"/>
<rect x="51.5" y="50.5" width="13" height="10" rx="1" fill="#fff" stroke="#3b78c8"/>
<path d="M51.5 52.5h13" stroke="#8db4e8"/>
<path d="M54.5 54v4M53 55.5l1.500 -1.500 1.500 1.500M55 57.500h7M60.5 56l1.500 1.500 -1.500 1.500M57 63.500h8" stroke="#7f93b0" fill="none" stroke-width=".8"/>
<rect x="93.5" y="50.500" width="15" height="15" rx="1.500" fill="#fbfdff" stroke="#6aa0de"/>
<path d="M93.5 52h15" stroke="#9cc2ee" stroke-width="2"/>
<path d="M98.500 53.500l3.500 3.500h-2v3h-3v-3h-2z" fill="#1a8a2a" stroke="#0a5a14" stroke-width=".6"/>
<path d="M103.500 64.500l3.500 -3.500h-2v-3h-3v3h-2z" fill="#ff3a3a" stroke="#c00000" stroke-width=".6"/>
<circle cx="129.500" cy="58.500" r="5.200" fill="none" stroke="#5a5a5a" stroke-width="1.300"/>
<path d="M129.500 51v5.500M129.500 60.500v5.500M122 58.500h5.500M131.500 58.500h5.500" stroke="#5a5a5a" stroke-width="1.300" fill="none"/>
<path d="M148.500 59.500v-8l1.500 -1.500h3l1.500 1.500h4.500v8z" fill="#ecebd8" stroke="#8a8f6a" stroke-width=".9"/>
<path d="M148.500 54.500h10" stroke="#b5b89a" stroke-width=".8"/>
<path d="M152.500 60v6" stroke="#666" stroke-dasharray="1 1" shape-rendering="crispEdges"/>
<path d="M160 54.500l1.800 4h4.200l-3.300 2.800 1.300 4.400-4-2.600-4 2.600 1.300 -4.400-3.300 -2.800h4.200z" fill="#f0f000" stroke="#6f7f1a" stroke-width=".9"/>
<rect x="177.500" y="51.500" width="15" height="13" rx="2" fill="#fff" stroke="#2b62c6" stroke-width="1.400"/>
<path d="M180 53v10" stroke="#2b62c6" stroke-width="2.400"/>
<path d="M183 54.500h8M183 57.500h8M183 60.500h8" stroke="#9db5dd" stroke-width=".8"/>
<path d="M181.500 54.500h1.500M181.500 60.500h1.500" stroke="#e00000" stroke-width="1.200"/><path d="M181.500 57.500h1.500" stroke="#222" stroke-width="1.200"/>
<rect x="205.500" y="50.500" width="12" height="13" fill="#f4f4f4" stroke="#b8b8b8"/>
<path d="M208.500 52v5M214.500 52v5M207 54.500h9" stroke="#8a8a9a" stroke-width=".9"/>
<path d="M217 62.500l5 4" stroke="#d8d800" stroke-width="2.200"/><path d="M217 62.500l5 4" stroke="#7a7a20" stroke-width=".6" transform="translate(.9 -.9)"/>
<circle cx="213.500" cy="59" r="4.600" fill="#cfd8ec" fill-opacity=".85" stroke="#4f8fe0" stroke-width="1.200"/>
<rect x="211.500" y="56" width="3.500" height="5" fill="#9aa4c0"/>
<path d="M240.500 50.500h8l3 3v10h-11z" fill="#fafafa" stroke="#9a9a9a"/>
<path d="M248.500 50.500v3h3" fill="none" stroke="#9a9a9a"/>
<path d="M242.500 53.500h4M242.500 56.500h6M242.500 59.500h3" stroke="#8a8a8a"/>
<path d="M248.5 56.5h3v4h4v3h-4v4h-3v-4h-4v-3h4z" fill="#00ee00" stroke="#0a7a0a" stroke-width="1"/>
<path d="M320.500 49.800l8 8-8 8-8 -8z" fill="#f6f6ec" stroke="#8a8a60" stroke-width=".8"/>
<path d="M320.500 50.800l7 7-3.500 3.500h-7l-3.500 -3.500z" fill="#f4f400"/>
<path d="M316.500 55.500h8" stroke="#b0b0a0" stroke-width="1.600"/>
<path d="M320.500 53v4" stroke="#8a8a8a" stroke-width="2"/><path d="M320.500 57v4.500" stroke="#5a6a10" stroke-width="2"/>
<path d="M341.500 57h11.500l-3.500 8h-3z" fill="#f4f400" stroke="#8a8a30" stroke-width=".7"/>
<path d="M346 61.500l3 3.500h-3z" fill="#fff"/>
<path d="M340.500 54.500l3.500 -1.500 1.500 -3h6l2 2.500 3.500 -1.500-1.500 4.500c-3 2 -10 2.500 -15 .5z" fill="#5aa2e4" stroke="#3a7ac8" stroke-width=".7"/>
<path d="M345.500 53.500l2 -2.500 1.500 2.500z" fill="#cfe2f6"/>
<circle cx="353.200" cy="61.500" r="4.200" fill="#0a8a0a" stroke="#0a5a0a" stroke-width=".6"/>
<path d="M351.800 58.800v5.400l4.400 -2.700z" fill="#fff"/><path d="M353 60.200v2.700l2.200 -1.400z" fill="#30ee30"/>
<path d="M507.5 52v14M505 63.500h14" stroke="#555" stroke-width="1.200" fill="none"/><path d="M507.5 50.800l-2.200 3h4.400zM520.5 63.500l-3 -2.200v4.400z" fill="#555"/>
<path d="M513.500 53v8M513.500 53.500h2.500M511 60.500h2.500" stroke="#14a014" stroke-width="1.400" fill="none"/>
<path d="M535.5 52v14M533 63.500h14" stroke="#555" stroke-width="1.200" fill="none"/><path d="M535.5 50.800l-2.200 3h4.400zM548.5 63.500l-3 -2.200v4.400z" fill="#555"/>
<path d="M541.500 50.500v11" stroke="#14a014" stroke-width="1.200"/><rect x="539.500" y="52.500" width="4" height="7" fill="#20e020" stroke="#108010" stroke-width=".9"/>
<path d="M563.5 52v14M561 63.500h14" stroke="#555" stroke-width="1.200" fill="none"/><path d="M563.5 50.800l-2.200 3h4.400zM576.5 63.500l-3 -2.200v4.400z" fill="#555"/>
<path d="M562.500 61.500c2 -3 4 -6.500 6 -6.500s3.500 2.500 5.500 4" stroke="#555" stroke-width="1.100" fill="none"/>
<path d="M562.500 61.500c1.500 -2.500 3 -5 4.500 -6" stroke="#14a014" stroke-width="1.200" fill="none"/>
<path d="M603 60l5.500 5" stroke="#6a6a20" stroke-width="3.400" stroke-linecap="butt"/><path d="M603.3 60.3l4.800 4.400" stroke="#f0f000" stroke-width="2"/><circle cx="599" cy="56" r="5.600" fill="#dfe9fb" stroke="#2b6cd4" stroke-width="1.300"/><path d="M596 56h6" stroke="#2b6cd4" stroke-width="1.800"/><path d="M599 53v6" stroke="#2b6cd4" stroke-width="1.800"/>
<path d="M631 60l5.500 5" stroke="#6a6a20" stroke-width="3.400" stroke-linecap="butt"/><path d="M631.3 60.3l4.800 4.400" stroke="#f0f000" stroke-width="2"/><circle cx="627" cy="56" r="5.600" fill="#dfe9fb" stroke="#2b6cd4" stroke-width="1.300"/><path d="M624 56h6" stroke="#2b6cd4" stroke-width="1.800"/>
<path d="M659.5 52v14M657 63.500h14" stroke="#555" stroke-width="1.200" fill="none"/><path d="M659.5 50.800l-2.200 3h4.400zM672.5 63.500l-3 -2.200v4.400z" fill="#555"/>
<path d="M664.500 53.500v7l4 -3.500z" fill="none" stroke="#14a014" stroke-width="1.200"/>
<path d="M687.5 52v14M685 63.500h14" stroke="#555" stroke-width="1.200" fill="none"/><path d="M687.5 50.800l-2.200 3h4.400zM700.5 63.500l-3 -2.200v4.400z" fill="#555"/>
<path d="M693.500 52v10" stroke="#2b6cd4" stroke-width="1.200"/><path d="M695 57.500h5M695 57.500l3 -2.500v5z" stroke="#e00000" fill="#e00000" stroke-width="1"/>
<path d="M718.500 50.500h8l3 3v10h-11z" fill="#fafafa" stroke="#9a9a9a"/>
<path d="M726.500 50.500v3h3" fill="none" stroke="#9a9a9a"/>
<path d="M723.500 53c-1.500 0 -2 .5 -2 2v6M720 56.500h4" stroke="#555" fill="none" stroke-width="1.100"/>
<path d="M726.5 56.5h3v4h4v3h-4v4h-3v-4h-4v-3h4z" fill="#00ee00" stroke="#0a7a0a" stroke-width="1"/>
<circle cx="760" cy="58" r="7.300" fill="#fdfdfd" stroke="#2b6cd4" stroke-width="2.200"/>
<circle cx="760" cy="58" r="8.300" fill="none" stroke="#1a4a9a" stroke-width=".5"/>
<path d="M760 53.500v4.500h3.500" stroke="#333" stroke-width="1.200" fill="none"/>
<rect x="787.500" y="51.500" width="15" height="13" fill="#fff" stroke="#2b6cd4" stroke-width="1.200"/>
<path d="M788 52.800h14" stroke="#7aa8e8" stroke-width="1.800"/><path d="M788 58.500h14" stroke="#2b6cd4" stroke-width=".9"/>
<path d="M790 56.500l2.500 0 2 -1.500 2.500 .8 2 -1.300h1.500" stroke="#c01010" stroke-width="1.200" fill="none"/>
<path d="M790 62.500l2.500 -.500 2 -1.500 2 1 1.500 -1.500 2 1.500" stroke="#10a010" stroke-width="1.200" fill="none"/>
<path d="M21.500 78v12.500l3 -3 2.500 5 1.800 -.9 -2.400 -4.800h4z" fill="#444" stroke="#444" stroke-width=".4"/>
<path d="M46 85.500h6.500M55 85.500h6.500M53.500 78v6.200M53.500 87v6.200" stroke="#555" stroke-width="1.100" fill="none"/>
<path d="M87.500 79v13" stroke="#555" stroke-width="1.100"/>
<path d="M110 85.500h12.500" stroke="#555" stroke-width="1.100"/>
<path d="M137.500 92l12.500 -12.500" stroke="#555" stroke-width="1.200"/>
<path d="M163.500 88l11 -8M166.500 92l11 -8.500M166.500 84v8M170 82v8.500M173.500 79v8.500" stroke="#555" stroke-width="1" fill="none"/>
<text x="174.500" y="94" font-size="6.500" font-weight="bold" fill="#444">E</text>
<path d="M193 78.500h13M193 81.500h13M193 85.500h13M193 89.500h9" stroke="#555" stroke-width="1" stroke-dasharray="1 1" fill="none" shape-rendering="crispEdges"/>
<text x="203" y="94" font-size="6.500" font-weight="bold" fill="#444">F</text>
<text x="223.500" y="89.500" font-size="11.500" fill="#666" stroke="#666" stroke-width=".3">A</text>
<rect x="249.500" y="78.500" width="12" height="13" fill="none" stroke="#555" stroke-dasharray="1 1" shape-rendering="crispEdges"/>
<text x="251.600" y="89.800" font-size="11" font-weight="bold" fill="#777">T</text>
<path d="M280 79l3 3-3 3-3 -3zM288 86l3 3-3 3-3 -3z" fill="#444"/>
<path d="M279.500 86.500l2 2.500 5 -6" stroke="#444" stroke-width="1.200" fill="none"/>
</svg>
</div></body></html>
